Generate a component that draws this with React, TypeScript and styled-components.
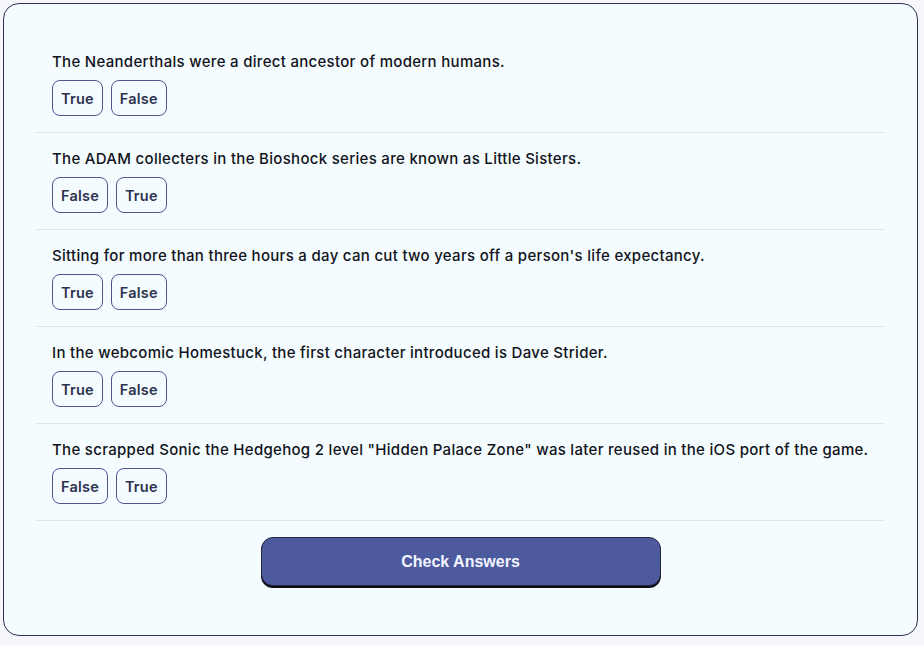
import React from "react";
import styled, { createGlobalStyle } from "styled-components";

const GlobalStyle = createGlobalStyle`
  html, body {
    margin: 0;
    padding: 0;
    background: #f5f7fb;
  }
  body {
    padding: 3px 6px 10px 3px;
    font-family: "Inter", "Noto Sans", sans-serif;
  }
`;

const questions = [
  {
    id: "q1",
    text: "The Neanderthals were a direct ancestor of modern humans.",
    answers: ["True", "False"],
  },
  {
    id: "q2",
    text: "The ADAM collecters in the Bioshock series are known as Little Sisters.",
    answers: ["False", "True"],
  },
  {
    id: "q3",
    text: "Sitting for more than three hours a day can cut two years off a person's life expectancy.",
    answers: ["True", "False"],
  },
  {
    id: "q4",
    text: "In the webcomic Homestuck, the first character introduced is Dave Strider.",
    answers: ["True", "False"],
  },
  {
    id: "q5",
    text: 'The scrapped Sonic the Hedgehog 2 level "Hidden Palace Zone" was later reused in the iOS port of the game.',
    answers: ["False", "True"],
  },
];

const Card = styled.main`
  box-sizing: border-box;
  width: 915px;
  min-height: 633px;
  padding: 32px 32px 48px;
  background: #f5fcff;
  border: 1px solid #2e3350;
  border-radius: 16px;
  display: flex;
  flex-direction: column;
  align-items: stretch;
`;

const Question = styled.section`
  padding: 16px 16px 16px;
  border-bottom: 1px solid #dce6ec;
`;

const Prompt = styled.h2`
  margin: 0 0 8px;
  font-size: 15px;
  line-height: 20px;
  font-weight: 500;
  color: #111320;
  letter-spacing: 0.3px;
`;

const Answers = styled.div`
  display: flex;
  gap: 8px;
`;

const Answer = styled.button`
  box-sizing: border-box;
  height: 36px;
  padding: 0 8px;
  background: transparent;
  border: 1px solid #4d5690;
  border-radius: 8px;
  font-family: "Inter", "Noto Sans", sans-serif;
  font-size: 14.5px;
  font-weight: 600;
  letter-spacing: 0.2px;
  color: #2e3350;
  cursor: pointer;
`;

const CheckButton = styled.button`
  align-self: center;
  box-sizing: border-box;
  margin-top: 16px;
  width: 400px;
  height: 49px;
  background: #4d5a9e;
  border: 1px solid #23263a;
  border-radius: 12px;
  box-shadow: 0 2px 0 #0c0d18;
  font-family: "Liberation Sans", Arial, sans-serif;
  font-size: 16px;
  font-weight: 700;
  color: #f2f4ff;
  cursor: pointer;
`;

export default function App() {
  return (
    <>
      <GlobalStyle />
      <Card>
        {questions.map((q) => (
          <Question key={q.id}>
            <Prompt>{q.text}</Prompt>
            <Answers>
              {q.answers.map((a) => (
                <Answer key={a}>{a}</Answer>
              ))}
            </Answers>
          </Question>
        ))}
        <CheckButton>Check Answers</CheckButton>
      </Card>
    </>
  );
}
